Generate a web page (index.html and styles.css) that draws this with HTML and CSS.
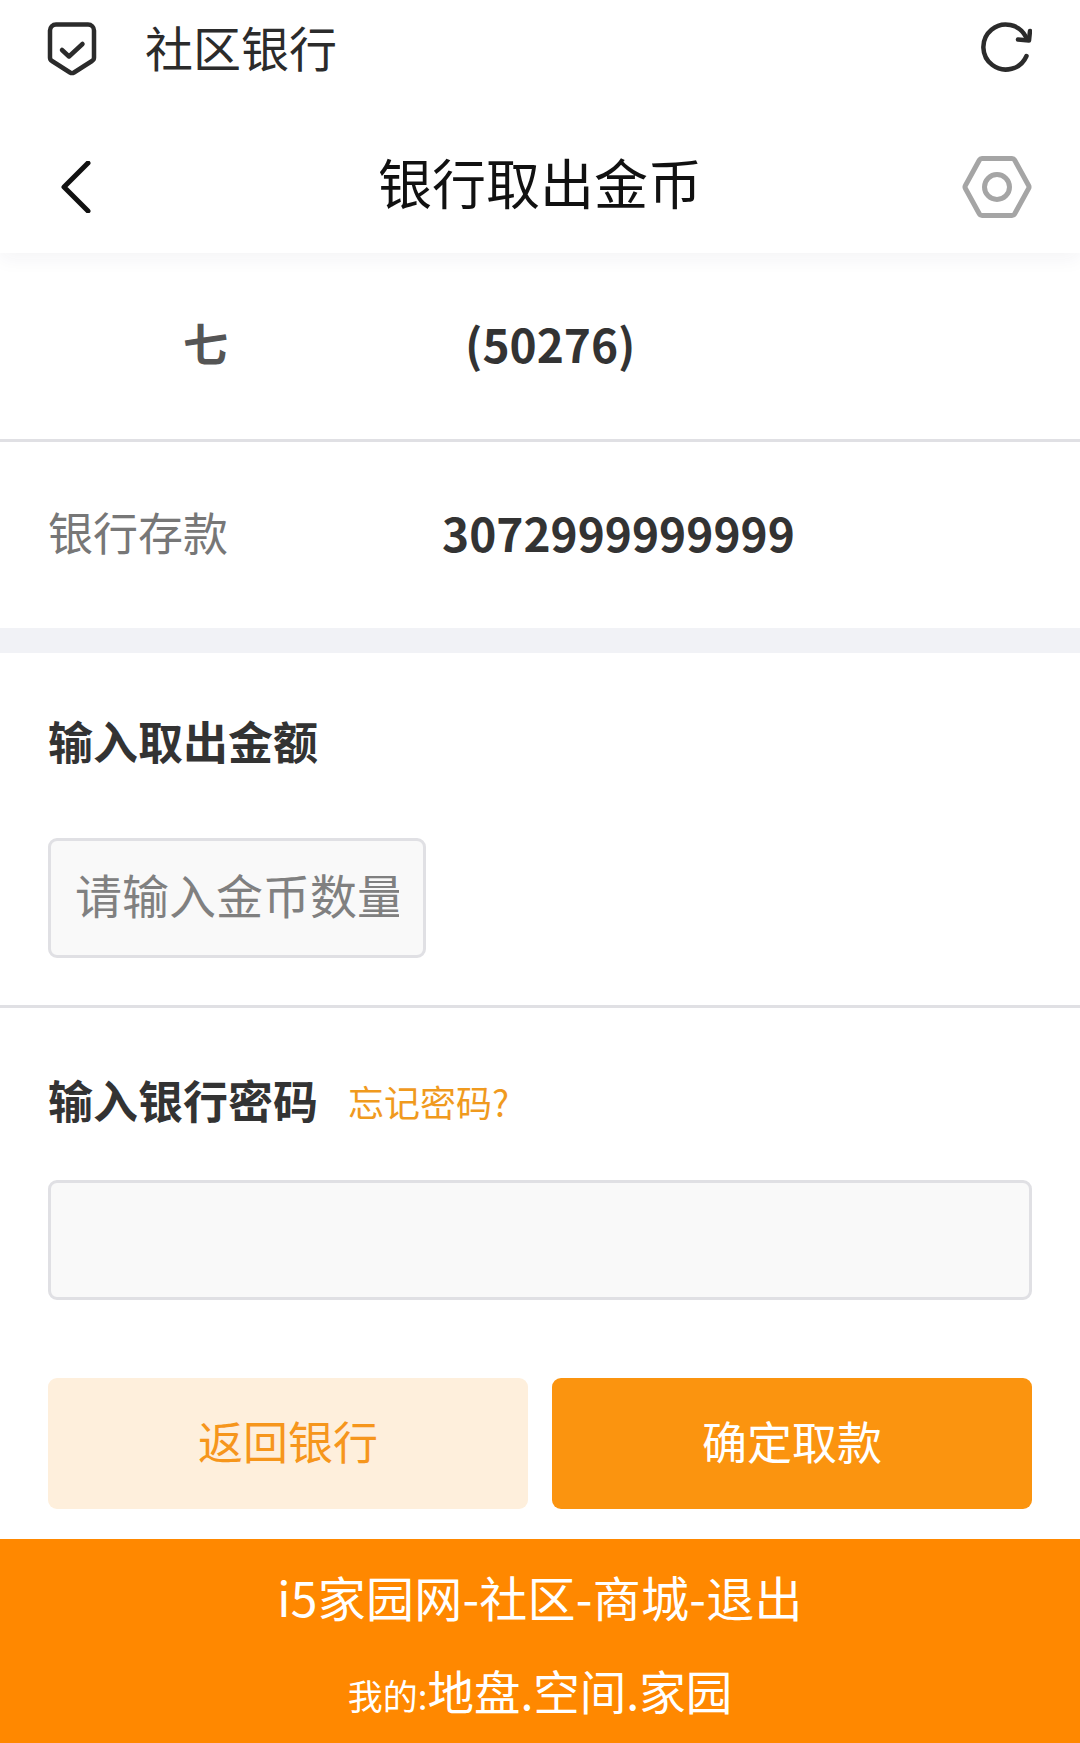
FILE: index.html
```html
<!DOCTYPE html>
<html lang="zh-CN">
<head>
<meta charset="utf-8">
<title>银行取出金币</title>
<link rel="stylesheet" href="styles.css">
</head>
<body>
<div class="page">
  <header class="topbar">
    <svg class="icon-shield" viewBox="0 0 50 54" aria-hidden="true">
      <path d="M9 2.500h32a6 6 0 0 1 6 6v27a4 4 0 0 1-2 3.500L27 50.500a4 4 0 0 1-4 0L5 39a4 4 0 0 1-2-3.500v-27a6 6 0 0 1 6-6z"/>
      <path d="M15 28l7 6.500 13.500-12.500"/>
    </svg>
    <span class="topbar-title">社区银行</span>
    <svg class="icon-refresh" viewBox="0 0 52 54" aria-hidden="true">
      <path d="M46.500 35A22.500 22.500 0 1 1 46 16"/>
      <path d="M50 10l-1 9.500-11-1"/>
    </svg>
  </header>
  <nav class="navbar">
    <svg class="icon-back" viewBox="0 0 30 52" aria-hidden="true"><path d="M27 2L3 26l24 24"/></svg>
    <h1 class="nav-title">银行取出金币</h1>
    <svg class="icon-gear" viewBox="0 0 70 62" aria-hidden="true">
      <path d="M20 2.500h30a3 3 0 0 1 2.600 1.500l14 25.500a3 3 0 0 1 0 3l-14 25.500a3 3 0 0 1-2.600 1.500H20a3 3 0 0 1-2.600-1.500l-14-25.500a3 3 0 0 1 0-3l14-25.500A3 3 0 0 1 20 2.500z"/>
      <circle cx="35" cy="31" r="12.500"/>
    </svg>
  </nav>
  <main>
    <section class="info-row info-user">
      <span class="info-name">七</span>
      <span class="info-id">(50276)</span>
    </section>
    <section class="info-row info-balance">
      <span class="info-label">银行存款</span>
      <span class="info-value">3072999999999</span>
    </section>
    <div class="band"></div>
    <section class="form-block form-amount">
      <h2 class="form-label">输入取出金额</h2>
      <input class="field field-short" type="text" placeholder="请输入金币数量">
    </section>
    <section class="form-block form-password">
      <div class="label-row">
        <h2 class="form-label">输入银行密码</h2>
        <a class="forgot">忘记密码?</a>
      </div>
      <input class="field field-full" type="password">
      <div class="actions">
        <button class="btn btn-light" type="button">返回银行</button>
        <button class="btn btn-solid" type="button">确定取款</button>
      </div>
    </section>
  </main>
  <footer class="footer">
    <p class="footer-links">i5家园网-社区-商城-退出</p>
    <p class="footer-mine"><span class="footer-small">我的:</span>地盘.空间.家园</p>
  </footer>
</div>
</body>
</html>
```
FILE: styles.css
```css
* { box-sizing: border-box; }
html, body { margin: 0; padding: 0; background: #fff; }
body { font-family: "Noto Sans CJK SC", "Noto Sans", sans-serif; color: #333; }
.page { width: 1080px; height: 1743px; overflow: hidden; display: flex; flex-direction: column; }

.topbar { height: 108px; padding: 0 48px 12px 47px; display: flex; align-items: center; }
.icon-shield { width: 50px; height: 54px; margin-top: 2px; fill: none; stroke: #2b2b2b; stroke-width: 4.500; stroke-linejoin: round; stroke-linecap: round; }
.topbar-title { margin: -4px 0 0 48px; font-size: 48px; line-height: 60px; color: #2b2b2b; flex: 1; }
.icon-refresh { width: 52px; height: 54px; fill: none; stroke: #2b2b2b; stroke-width: 4.500; stroke-linecap: round; stroke-linejoin: round; }

.navbar { position: relative; z-index: 1; height: 145px; padding: 12px 48px 0 61px; display: flex; align-items: center; justify-content: space-between; background: #fff; box-shadow: 0 6px 18px rgba(30, 40, 80, .05); clip-path: inset(0 0 -40px 0); }
.icon-back { width: 30px; height: 52px; fill: none; stroke: #111; stroke-width: 5; stroke-linecap: round; stroke-linejoin: round; }
.nav-title { position: absolute; left: 0; right: 0; top: 41px; margin: 0; text-align: center; font-size: 54px; line-height: 66px; font-weight: 400; color: #111; }
.icon-gear { width: 70px; height: 62px; fill: none; stroke: #a5a5a5; stroke-width: 5; stroke-linejoin: round; }

.info-row { display: flex; align-items: center; font-size: 45px; }
.info-user { height: 189px; padding-bottom: 7px; border-bottom: 3px solid #e0e0e4; }
.info-balance { height: 186px; padding-bottom: 7px; }
.info-name { margin-left: 183px; width: 282px; font-weight: 700; color: #555; }
.info-id { font-weight: 700; font-size: 46px; color: #333; }
.info-label { margin-left: 48px; width: 394px; color: #777; }
.info-value { font-weight: 700; font-size: 46px; color: #333; }
.band { height: 25px; background: #f1f2f6; }

.form-block { padding: 0 48px; }
.form-amount { height: 355px; padding-top: 58px; border-bottom: 3px solid #e0e0e4; }
.form-label { margin: 0; font-size: 45px; line-height: 60px; font-weight: 700; color: #333; }
.field { display: block; height: 120px; margin-top: 67px; padding: 0 24px 10px; border: 3px solid #e0e0e4; border-radius: 9px; background: #f9f9f9; font-family: inherit; font-size: 47px; color: #333; outline: none; }
.field::placeholder { color: #808080; opacity: 1; }
.field-short { width: 378px; }
.field-full { width: 984px; margin-top: 49px; }
.form-password { padding-top: 60px; }
.label-row { display: flex; align-items: center; gap: 30px; }
.forgot { font-size: 36px; line-height: 60px; margin-top: 3px; color: #f09a1e; }
.actions { display: flex; gap: 24px; margin-top: 78px; }
.btn { flex: 1; height: 131px; border: 0; border-radius: 9px; font-family: inherit; font-size: 45px; padding: 0 0 6px; }
.btn-light { background: #feefdc; color: #f6961c; }
.btn-solid { background: #fb940f; color: #fff; }

.footer { margin-top: auto; height: 204px; background: #ff8800; color: #fff; text-align: center; }
.footer p { margin: 0; }
.footer-links { font-size: 48px; letter-spacing: .25px; line-height: 60px; padding-top: 27px; }
.footer-mine { font-size: 46.5px; line-height: 60px; margin-top: 34px !important; }
.footer-small { font-size: 35px; }
```
